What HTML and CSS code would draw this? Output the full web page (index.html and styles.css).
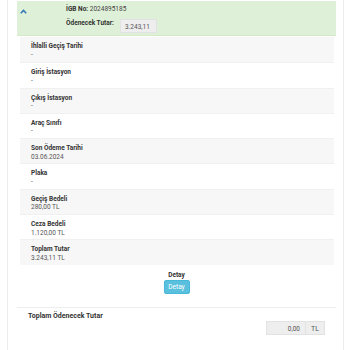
FILE: index.html
```html
<!DOCTYPE html>
<html lang="tr">
<head>
    <meta charset="UTF-8">
    <title>İhlal Detay</title>
    <link rel="stylesheet" href="styles.css">
</head>
<body>
    <div class="panel">
        <!-- Başlık: İGB numarası ve tutar -->
        <div class="ihlal-baslik">
            <div class="chevron">
                <svg width="7" height="5" viewBox="0 0 7 5"><path d="M0.8 4.2 L3.5 1.4 L6.2 4.2" fill="none" stroke="#337ab7" stroke-width="1.6"/></svg>
            </div>
            <div class="baslik-bilgi">
                <div class="igb"><b>İGB No:</b> 2024895185</div>
                <div class="tutar-satir">
                    <b>Ödenecek Tutar:</b>
                    <span class="tutar-kutu">3.243,11</span>
                </div>
            </div>
        </div>

        <div class="detay-liste">
            <div class="detay-satir"><b>İhlalli Geçiş Tarihi</b><span>-</span></div>
            <div class="detay-satir"><b>Giriş İstasyon</b><span>-</span></div>
            <div class="detay-satir"><b>Çıkış İstasyon</b><span>-</span></div>
            <div class="detay-satir"><b>Araç Sınıfı</b><span>-</span></div>
            <div class="detay-satir"><b>Son Ödeme Tarihi</b><span>03.06.2024</span></div>
            <div class="detay-satir"><b>Plaka</b><span>-</span></div>
            <div class="detay-satir"><b>Geçiş Bedeli</b><span>280,00 TL</span></div>
            <div class="detay-satir"><b>Ceza Bedeli</b><span>1.120,00 TL</span></div>
            <div class="detay-satir"><b>Toplam Tutar</b><span>3.243,11 TL</span></div>
        </div>

        <div class="detay-alan">
            <b>Detay</b>
            <button class="btn-detay">Detay</button>
        </div>

        <div class="toplam">
            <div class="toplam-baslik">Toplam Ödenecek Tutar</div>
            <div class="toplam-giris">
                <span class="toplam-deger">0,00</span>
                <span class="toplam-birim">TL</span>
            </div>
        </div>
    </div>
</body>
</html>
```

FILE: styles.css
```css
/* Genel */
body {
    font-family: Roboto, 'Liberation Sans', sans-serif;
    margin: 0;
    padding: 0;
    background-color: #fff;
    color: #333;
    font-size: 6.5px;
}

.panel {
    margin: 0 6px 0 7px;
    border-left: 1px solid #ececec;
    border-right: 1px solid #ececec;
    height: 350px;
    padding: 1px 7px 0 9px;
}

/* Yeşil başlık */
.ihlal-baslik {
    background-color: #dff0d8;
    display: flex;
    height: 35px;
    border-bottom: 1px solid #d6e9c6;
    box-sizing: border-box;
}

.chevron {
    width: 49px;
    padding: 7px 0 0 3px;
    box-sizing: border-box;
}

.baslik-bilgi {
    padding-top: 4px;
}

.igb {
    color: #444;
}

.igb b, .tutar-satir b {
    color: #333;
}

.tutar-satir {
    display: flex;
    align-items: flex-start;
    margin-top: 6px;
}

.tutar-kutu {
    margin-left: 6px;
    margin-top: 0;
    width: 37px;
    height: 14px;
    line-height: 14px;
    box-sizing: border-box;
    padding-left: 4px;
    background-color: #eee;
    border: 1px solid #e2e2e2;
    color: #555;
}

/* Detay satırları */
.detay-liste {
    margin: 1px 2px 0 3px;
}

.detay-satir {
    display: flex;
    flex-direction: column;
    height: 25.3px;
    box-sizing: border-box;
    padding: 5px 0 0 11px;
    border-top: 1px solid #f0f0f0;
    line-height: 8.5px;
}

.detay-satir:nth-child(odd) {
    background-color: #f7f7f7;
}

.detay-satir:first-child {
    border-top: none;
}

.detay-satir span {
    color: #555;
}

.detay-alan {
    display: flex;
    flex-direction: column;
    align-items: center;
    padding-top: 6px;
    line-height: 8px;
}

.btn-detay {
    margin-top: 1px;
    width: 26px;
    height: 14px;
    padding: 0;
    font-family: inherit;
    font-size: 6.5px;
    background-color: #5bc0de;
    border: 1px solid #46b8da;
    border-radius: 2px;
    color: #fff;
}

/* Toplam */
.toplam {
    margin-top: 13px;
    border-top: 1px solid #eee;
    padding: 4px 11px 0 11px;
}

.toplam-baslik {
    font-weight: bold;
    font-size: 7px;
}

.toplam-giris {
    display: flex;
    justify-content: flex-end;
    margin-top: 1px;
}

.toplam-deger {
    width: 40px;
    height: 14px;
    line-height: 14px;
    box-sizing: border-box;
    text-align: right;
    padding-right: 5px;
    background-color: #eee;
    border: 1px solid #e2e2e2;
    color: #555;
}

.toplam-birim {
    width: 19px;
    height: 14px;
    line-height: 14px;
    text-align: center;
    box-sizing: border-box;
    background-color: #eee;
    border: 1px solid #e2e2e2;
    border-left: none;
    color: #555;
    font-size: 7px;
}
```
